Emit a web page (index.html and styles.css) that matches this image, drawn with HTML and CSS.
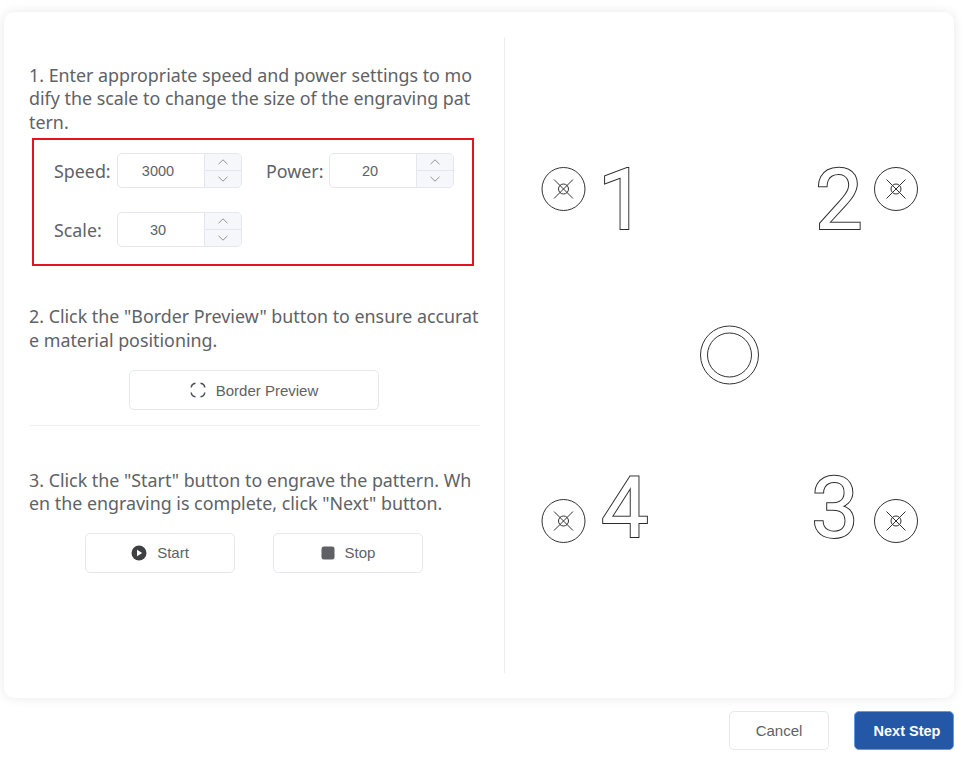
FILE: index.html
```html
<!DOCTYPE html>
<html lang="en">
<head>
<meta charset="utf-8">
<title>Engraving test</title>
<link rel="stylesheet" href="styles.css">
</head>
<body>
<main class="card">
  <section class="steps">
    <p class="step step-1">1. Enter appropriate speed and power settings to modify the scale to change the size of the engraving pattern.</p>
    <div class="params">
      <div class="row">
        <div class="field">
          <label class="label">Speed:</label>
          <div class="num">
            <span class="num-value">3000</span>
            <span class="num-ctrl">
              <span class="arrow"><svg width="10" height="6" viewBox="0 0 10 6"><path class="chev" d="M.5 5.2 5 .8l4.500 4.400"/></svg></span>
              <span class="arrow arrow-down"><svg width="10" height="6" viewBox="0 0 10 6"><path class="chev" d="M.5.8 5 5.200 9.500.8"/></svg></span>
            </span>
          </div>
        </div>
        <div class="field">
          <label class="label">Power:</label>
          <div class="num">
            <span class="num-value">20</span>
            <span class="num-ctrl">
              <span class="arrow"><svg width="10" height="6" viewBox="0 0 10 6"><path class="chev" d="M.5 5.2 5 .8l4.500 4.400"/></svg></span>
              <span class="arrow arrow-down"><svg width="10" height="6" viewBox="0 0 10 6"><path class="chev" d="M.5.8 5 5.200 9.500.8"/></svg></span>
            </span>
          </div>
        </div>
      </div>
      <div class="row">
        <div class="field">
          <label class="label">Scale:</label>
          <div class="num">
            <span class="num-value">30</span>
            <span class="num-ctrl">
              <span class="arrow"><svg width="10" height="6" viewBox="0 0 10 6"><path class="chev" d="M.5 5.2 5 .8l4.500 4.400"/></svg></span>
              <span class="arrow arrow-down"><svg width="10" height="6" viewBox="0 0 10 6"><path class="chev" d="M.5.8 5 5.200 9.500.8"/></svg></span>
            </span>
          </div>
        </div>
      </div>
    </div>
    <p class="step step-2">2. Click the "Border Preview" button to ensure accurate material positioning.</p>
    <div class="actions actions-2">
      <button class="btn btn-wide">
        <svg width="16" height="16" viewBox="0 0 16 16"><path class="frame" d="M1.200 5.500C1.500 3.200 3.200 1.500 5.500 1.200M10.500 1.200C12.800 1.500 14.500 3.200 14.800 5.500M14.800 10.500C14.500 12.800 12.800 14.500 10.500 14.800M5.500 14.800C3.200 14.500 1.500 12.800 1.200 10.500"/></svg>
        Border Preview
      </button>
    </div>
    <hr class="rule">
    <p class="step step-3">3. Click the "Start" button to engrave the pattern. When the engraving is complete, click "Next" button.</p>
    <div class="actions actions-3">
      <button class="btn btn-mid">
        <svg width="16" height="16" viewBox="0 0 16 16"><circle class="solid" cx="8" cy="8" r="7.500"/><path class="play" d="M6 4.800v6.400L11.200 8z"/></svg>
        Start
      </button>
      <button class="btn btn-mid">
        <svg width="14" height="14" viewBox="0 0 14 14"><rect class="solid-soft" x="0.500" y="0.500" width="13" height="13" rx="2.500"/></svg>
        Stop
      </button>
    </div>
  </section>
  <section class="pattern">
    <svg class="drawing" width="449" height="636" viewBox="505 37 449 636">
      <g class="marks">
        <circle cx="563.500" cy="189" r="21.500"/><circle cx="563.500" cy="189" r="5"/><path d="M554 179.500l19 19M573 179.500l-19 19"/>
        <circle cx="896" cy="189" r="21.500"/><circle cx="896" cy="189" r="5"/><path d="M886.500 179.500l19 19M905.500 179.500l-19 19"/>
        <circle cx="563.500" cy="521" r="21.500"/><circle cx="563.500" cy="521" r="5"/><path d="M554 511.500l19 19M573 511.500l-19 19"/>
        <circle cx="896" cy="521" r="21.500"/><circle cx="896" cy="521" r="5"/><path d="M886.500 511.500l19 19M905.500 511.500l-19 19"/>
        <circle cx="729.500" cy="355" r="29"/><circle cx="729.500" cy="355" r="22"/>
      </g>
      <g class="digits">
        <text x="598" y="228.500">1</text>
        <text x="815" y="228.500">2</text>
        <text x="601" y="537">4</text>
        <text x="811" y="537">3</text>
      </g>
    </svg>
  </section>
</main>
<footer class="footer">
  <button class="btn btn-foot">Cancel</button>
  <button class="btn btn-foot btn-primary">Next Step</button>
</footer>
</body>
</html>
```
FILE: styles.css
```css
* { box-sizing: border-box; }
html, body { margin: 0; padding: 0; }
body {
  width: 972px;
  height: 780px;
  background: #fff;
  color: #606266;
  font-family: "Noto Sans", "Liberation Sans", sans-serif;
  overflow: hidden;
}
.card {
  display: flex;
  margin: 12px 0 0 4px;
  width: 950px;
  height: 686px;
  padding: 25px 0;
  background: #fff;
  border-radius: 10px;
  box-shadow: 0 0 12px rgba(0, 0, 0, .09);
}
.steps {
  width: 501px;
  padding: 27px 25px 0 25px;
  border-right: 1px solid #ebedf0;
}
.step {
  margin: 0;
  font-size: 17.850px;
  line-height: 23.400px;
  word-break: break-all;
}
.step-1 { width: 446px; }
.step-2 { margin-top: 39px; }
.step-3 { margin-top: 43px; }
.params {
  margin-top: 4px;
  width: 442px;
  height: 128px;
  margin-left: 3px;
  padding: 13px 0 0 20px;
  border: 2px solid #e3141f;
}
.row { display: flex; gap: 24px; margin-bottom: 24px; }
.field { display: flex; align-items: center; }
.label { width: 63px; font-size: 17.850px; }
.num {
  display: flex;
  width: 125px;
  height: 35px;
  border: 1px solid #e4e7ed;
  border-radius: 5px;
  background: #fff;
  overflow: hidden;
}
.num-value {
  flex: 1;
  padding-right: 6px;
  text-align: center;
  font: 14.500px/35px "Liberation Sans", sans-serif;
}
.num-ctrl {
  display: flex;
  flex-direction: column;
  width: 37px;
  border-left: 1px solid #e4e7ed;
  background: #f5f7fa;
}
.arrow { flex: 1; display: flex; align-items: center; justify-content: center; }
.arrow-down { border-top: 1px solid #e4e7ed; }
.chev { fill: none; stroke: #909399; stroke-width: 1; }
.actions { display: flex; justify-content: center; }
.actions-2 { margin-top: 18px; }
.actions-3 { margin-top: 17px; gap: 38px; }
.btn {
  display: inline-flex;
  align-items: center;
  justify-content: center;
  gap: 10px;
  height: 40px;
  padding: 0;
  border: 1px solid #e4e7ed;
  border-radius: 5px;
  background: #fff;
  color: #606266;
  font: 15px "Liberation Sans", sans-serif;
}
.btn-wide { width: 250px; }
.btn-mid { width: 150px; }
.frame { fill: none; stroke: #4a4e57; stroke-width: 1.500; }
.solid { fill: #3f4043; }
.play { fill: #fff; }
.solid-soft { fill: #5f6066; }
.rule {
  margin: 15px -1px 0 0;
  height: 1px;
  border: 0;
  background: #f0f1f4;
}
.pattern { flex: 1; }
.drawing { display: block; }
.marks { fill: none; stroke: #333; stroke-width: 1; }
.digits {
  fill: #fff;
  stroke: #2c2c2c;
  stroke-width: 2;
  paint-order: stroke;
  font-family: Roboto, sans-serif;
  font-size: 85px;
}
.footer {
  display: flex;
  justify-content: flex-end;
  gap: 25px;
  width: 954px;
  margin-top: 13px;
}
.btn-foot { width: 100px; height: 39px; }
.btn-primary {
  padding-left: 6px;
  background: #2458a6;
  border-color: #5b9ded;
  color: #fff;
  font-size: 14.500px;
  font-weight: 700;
}
```
